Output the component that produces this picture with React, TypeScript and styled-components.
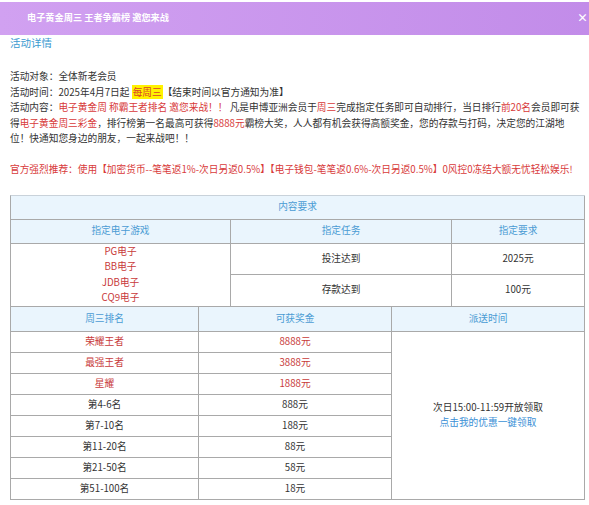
import React from 'react';
import styled, { createGlobalStyle } from 'styled-components';

const GlobalStyle = createGlobalStyle`
  html, body { margin: 0; padding: 0; background: #fff; }
  body { font-family: "Noto Sans CJK SC", "Noto Sans", sans-serif; color: #333; }
`;

const Page = styled.div`
  width: 589px;
  height: 505px;
  overflow: hidden;
  padding-top: 2px;
  box-sizing: border-box;
`;

const Header = styled.div`
  height: 33px;
  display: flex;
  align-items: flex-start;
  padding: 9px 0 0 27px;
  box-sizing: border-box;
  background: linear-gradient(90deg, #d1a1f1, #c28ce9);
  overflow: hidden;
`;

const HeaderTitle = styled.h1`
  margin: 0;
  font-size: 9.2px;
  font-weight: 700;
  color: #fff;
  line-height: 13px;
  white-space: pre;
`;

const Close = styled.span`
  margin-left: auto;
  margin-right: 1px;
  color: #fff;
  font-size: 11px;
  font-weight: 700;
  line-height: 13px;
`;

const Body = styled.div`
  padding: 0 4px 0 10px;
`;

const SectionTitle = styled.h2`
  margin: 0;
  font-size: 10.5px;
  font-weight: 400;
  line-height: 16px;
  color: #3a9ad0;
`;

const Info = styled.p`
  margin: 18px 0 0;
  font-size: 9.7px;
  line-height: 15.5px;
  white-space: nowrap;
  color: #333;
`;

const Red = styled.span`
  color: #d83a3a;
`;

const Mark = styled.span`
  background: #fff200;
  color: #d8402a;
  padding: 0 1px;
`;

const Grid = styled.div<{ $cols: string; $rows: string; $top?: boolean }>`
  width: 575px;
  box-sizing: border-box;
  display: grid;
  grid-template-columns: ${(p) => p.$cols};
  grid-template-rows: ${(p) => p.$rows};
  border-left: 1px solid #a9a9a9;
  border-top: ${(p) => (p.$top ? '1px solid #c9d2da' : 'none')};
  font-size: 9.7px;
`;

const Tables = styled.div`
  margin-top: 17px;
`;

const Cell = styled.div<{ $head?: boolean; $red?: boolean; $span?: number; $rowSpan?: number }>`
  box-sizing: border-box;
  border-right: 1px solid #a9a9a9;
  border-bottom: 1px solid #a9a9a9;
  display: flex;
  flex-direction: column;
  align-items: center;
  justify-content: center;
  text-align: center;
  line-height: 15.5px;
  background: ${(p) => (p.$head ? '#eaf5fd' : '#fff')};
  color: ${(p) => (p.$head ? '#4a9cd4' : p.$red ? '#c83a3a' : '#333')};
  ${(p) => (p.$span ? `grid-column: span ${p.$span};` : '')}
  ${(p) => (p.$rowSpan ? `grid-row: span ${p.$rowSpan};` : '')}
`;

const Link = styled.span`
  color: #3b90d6;
`;

const ranks: { name: string; prize: string; red?: boolean }[] = [
  { name: '荣耀王者', prize: '8888元', red: true },
  { name: '最强王者', prize: '3888元', red: true },
  { name: '星耀', prize: '1888元', red: true },
  { name: '第4-6名', prize: '888元' },
  { name: '第7-10名', prize: '188元' },
  { name: '第11-20名', prize: '88元' },
  { name: '第21-50名', prize: '58元' },
  { name: '第51-100名', prize: '18元' },
];

export default function App() {
  return (
    <>
      <GlobalStyle />
      <Page>
        <Header>
          <HeaderTitle>电子黄金周三 王者争霸榜 邀您来战</HeaderTitle>
          <Close>×</Close>
        </Header>
        <Body>
          <SectionTitle>活动详情</SectionTitle>
          <Info>
            活动对象：全体新老会员
            <br />
            活动时间：2025年4月7日起 <Mark>每周三</Mark>【结束时间以官方通知为准】
            <br />
            活动内容：<Red>电子黄金周 称霸王者排名 邀您来战！！</Red> 凡是申博亚洲会员于<Red>周三</Red>完成指定任务即可自动排行，当日排行<Red>前20名</Red>会员即可获
            <br />
            得<Red>电子黄金周三彩金</Red>，排行榜第一名最高可获得<Red>8888元</Red>霸榜大奖，人人都有机会获得高额奖金，您的存款与打码，决定您的江湖地
            <br />
            位！快通知您身边的朋友，一起来战吧！！
            <br />
            <br />
            <Red>官方强烈推荐：使用【加密货币--笔笔返1%-次日另返0.5%】【电子钱包-笔笔返0.6%-次日另返0.5%】0风控0冻结大额无忧轻松娱乐!</Red>
          </Info>
          <Tables>
            <Grid $cols="220px 221px 1fr" $rows="24px 24px 31px 32px" $top>
              <Cell $head $span={3}>内容要求</Cell>
              <Cell $head>指定电子游戏</Cell>
              <Cell $head>指定任务</Cell>
              <Cell $head>指定要求</Cell>
              <Cell $red $rowSpan={2}>
                <span>PG电子</span>
                <span>BB电子</span>
                <span>JDB电子</span>
                <span>CQ9电子</span>
              </Cell>
              <Cell>投注达到</Cell>
              <Cell>2025元</Cell>
              <Cell>存款达到</Cell>
              <Cell>100元</Cell>
            </Grid>
            <Grid $cols="188px 193px 1fr" $rows="25px repeat(8, 21px)">
              <Cell $head>周三排名</Cell>
              <Cell $head>可获奖金</Cell>
              <Cell $head>派送时间</Cell>
              {ranks.map((r, i) => (
                <React.Fragment key={r.name}>
                  <Cell $red={r.red}>{r.name}</Cell>
                  <Cell $red={r.red}>{r.prize}</Cell>
                  {i === 0 && (
                    <Cell $rowSpan={8}>
                      <span>次日15:00-11:59开放领取</span>
                      <Link>点击我的优惠一键领取</Link>
                    </Cell>
                  )}
                </React.Fragment>
              ))}
            </Grid>
          </Tables>
        </Body>
      </Page>
    </>
  );
}
